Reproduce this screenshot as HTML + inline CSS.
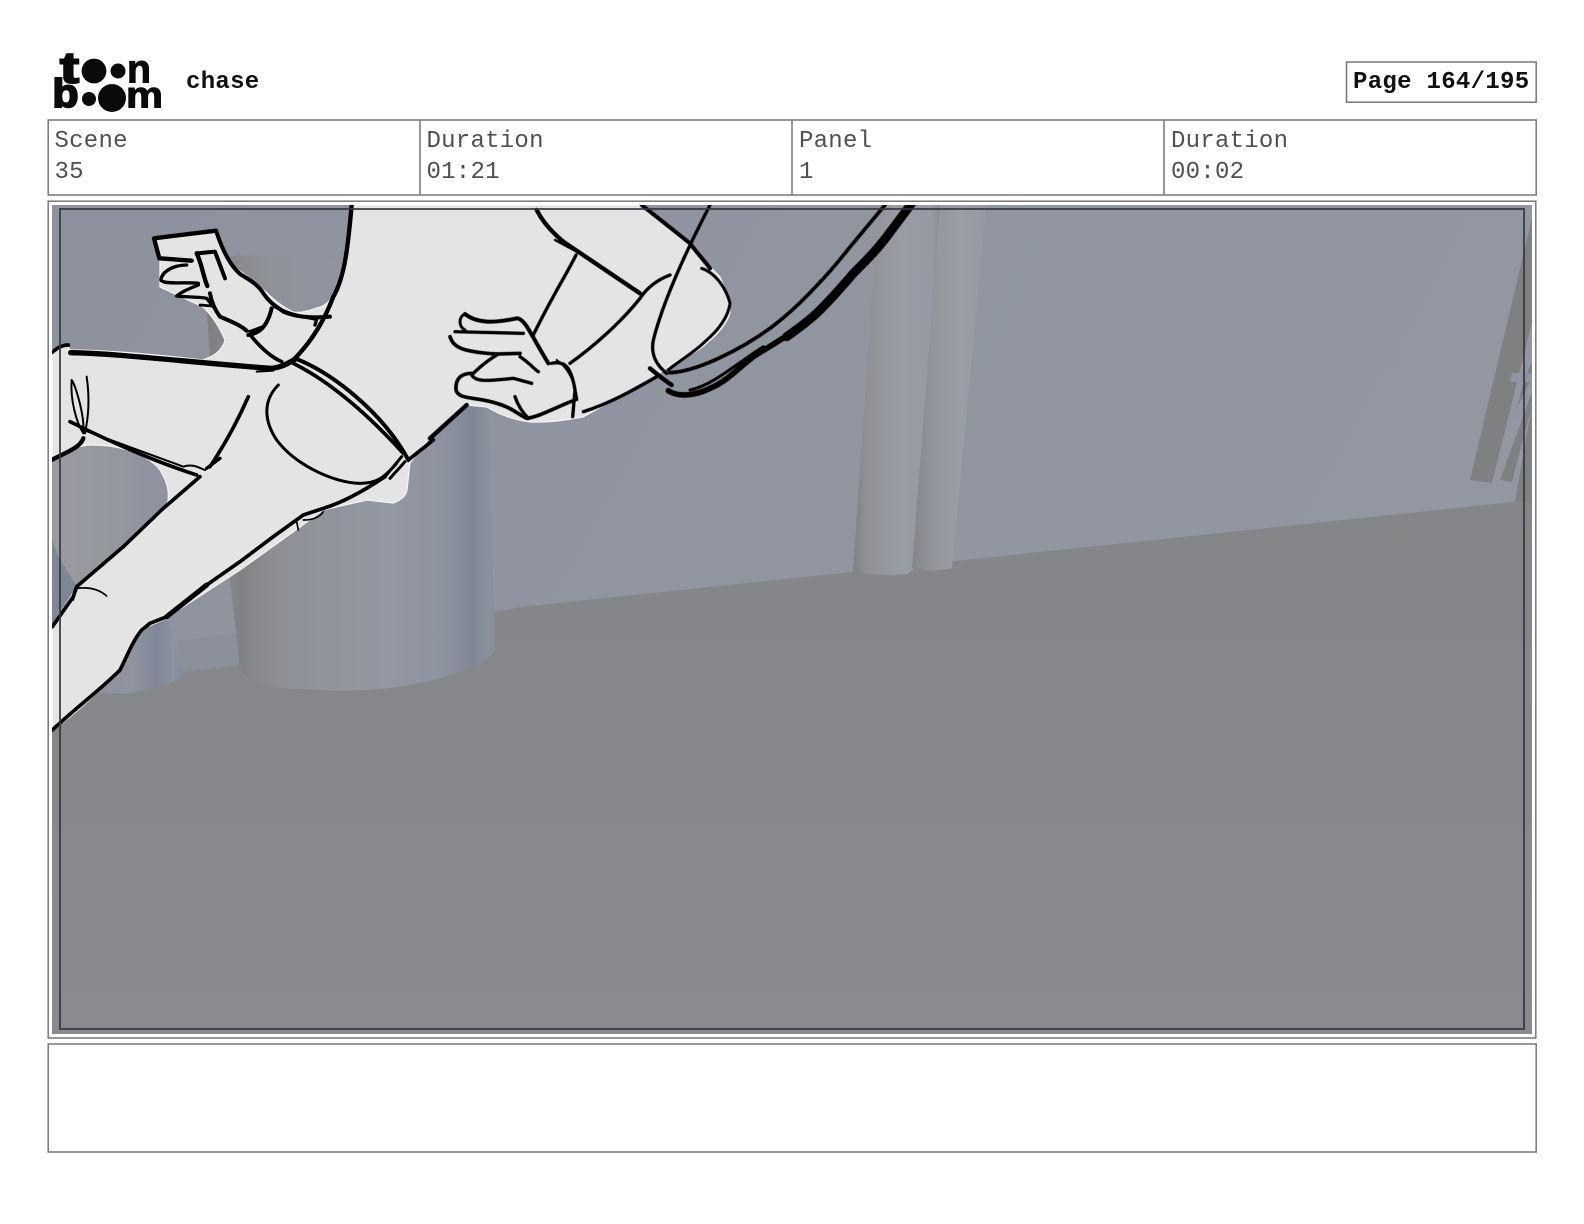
<!DOCTYPE html>
<html lang="en">
<head>
<meta charset="utf-8">
<title>chase - Page 164/195</title>
<style>
html,body{margin:0;padding:0;background:#fff;}
body{width:1584px;height:1224px;position:relative;overflow:hidden;font-family:"Liberation Mono",monospace;}
.t{position:absolute;font-size:24px;line-height:28px;white-space:pre;color:#505050;letter-spacing:.25px;}
.b{font-weight:bold;color:#111;letter-spacing:.3px;}
svg{position:absolute;left:0;top:0;}
</style>
</head>
<body>
<svg width="1584" height="1224" viewBox="0 0 1584 1224">
  <g fill="none" stroke="#777" stroke-width="1.5">
    <rect x="48.2" y="120" width="1488" height="75"/>
    <path d="M420,120V195M792,120V195M1164,120V195"/>
    <rect x="1346.5" y="62" width="189.7" height="40.2"/>
    <rect x="48.2" y="201.2" width="1487.6" height="836.8"/>
    <rect x="48.2" y="1044" width="1488" height="108"/>
  </g>
  <g fill="#0a0a0a" stroke="#0a0a0a" font-family="'Liberation Sans',sans-serif" font-weight="bold">
    <text x="60" y="82.5" font-size="44" stroke-width="2" textLength="19" lengthAdjust="spacingAndGlyphs">t</text>
    <text x="127" y="82.5" font-size="40" stroke-width="1" textLength="24" lengthAdjust="spacingAndGlyphs">n</text>
    <text x="52.5" y="107" font-size="40" stroke-width="2" textLength="26" lengthAdjust="spacingAndGlyphs">b</text>
    <text x="126" y="107.5" font-size="37" stroke-width="1" textLength="37" lengthAdjust="spacingAndGlyphs">m</text>
  </g>
  <g fill="#0a0a0a">
    <circle cx="94" cy="71" r="12.4"/>
    <circle cx="118" cy="71" r="7.5"/>
    <circle cx="89" cy="99" r="7"/>
    <circle cx="112" cy="98" r="14"/>
  </g>
</svg>

<div class="t b" style="left:186px;top:69px">chase</div>
<div class="t b" style="left:1353px;top:69px">Page 164/195</div>

<div class="t" style="left:54.5px;top:128px">Scene</div>
<div class="t" style="left:54.5px;top:159px">35</div>
<div class="t" style="left:426.5px;top:128px">Duration</div>
<div class="t" style="left:426.5px;top:159px">01:21</div>
<div class="t" style="left:799px;top:128px">Panel</div>
<div class="t" style="left:799px;top:159px">1</div>
<div class="t" style="left:1171px;top:128px">Duration</div>
<div class="t" style="left:1171px;top:159px">00:02</div>

<svg width="1584" height="1224" viewBox="0 0 1584 1224">
  <defs>
    <clipPath id="c"><rect x="52" y="205" width="1480" height="829"/></clipPath>
    <linearGradient id="wall" x1="0" y1="0" x2="1" y2="0.3">
      <stop offset="0" stop-color="#8e929e"/><stop offset=".5" stop-color="#9095a0"/><stop offset="1" stop-color="#9297a1"/>
    </linearGradient>
    <linearGradient id="floor" x1="0" y1="0" x2="0" y2="1">
      <stop offset="0" stop-color="#848588"/><stop offset="1" stop-color="#8a8b8f"/>
    </linearGradient>
    <linearGradient id="cyl" x1="0" y1="0" x2="1" y2="0">
      <stop offset="0" stop-color="#858689"/><stop offset=".05" stop-color="#808184"/><stop offset=".11" stop-color="#88898c"/>
      <stop offset=".2" stop-color="#8e9095"/><stop offset=".36" stop-color="#90949c"/><stop offset=".6" stop-color="#9297a1"/>
      <stop offset=".78" stop-color="#8e94a0"/><stop offset=".86" stop-color="#878d9a"/><stop offset=".92" stop-color="#7e8696"/>
      <stop offset=".97" stop-color="#8b919e"/><stop offset="1" stop-color="#878d99"/>
    </linearGradient>
    <linearGradient id="cyl2" x1="0" y1="0" x2="1" y2="0">
      <stop offset="0" stop-color="#8d9199"/><stop offset=".5" stop-color="#8f94a0"/><stop offset=".75" stop-color="#7e8697"/>
      <stop offset=".9" stop-color="#8b92a1"/><stop offset="1" stop-color="#828a9a"/>
    </linearGradient>
    <linearGradient id="blob" x1="0" y1="0" x2="1" y2="0">
      <stop offset="0" stop-color="#9a9b9f"/><stop offset=".5" stop-color="#9597a0"/><stop offset="1" stop-color="#8e929f"/>
    </linearGradient>
    <linearGradient id="col" x1="0" y1="0" x2="1" y2="0">
      <stop offset="0" stop-color="#7e7f82"/><stop offset=".2" stop-color="#898a8e"/><stop offset=".5" stop-color="#90929a"/><stop offset="1" stop-color="#8f94a0"/>
    </linearGradient>
    <linearGradient id="p1" x1="0" y1="0" x2="1" y2="0">
      <stop offset="0" stop-color="#7f8083"/><stop offset=".14" stop-color="#8f9094"/><stop offset=".5" stop-color="#999ca4"/>
      <stop offset=".85" stop-color="#959aa4"/><stop offset="1" stop-color="#82858c"/>
    </linearGradient>
    <linearGradient id="p2" x1="0" y1="0" x2="1" y2="0">
      <stop offset="0" stop-color="#84858a"/><stop offset=".3" stop-color="#94969c"/><stop offset=".65" stop-color="#9a9da5"/>
      <stop offset="1" stop-color="#959aa5"/>
    </linearGradient>
    <filter id="s" x="-2%" y="-2%" width="104%" height="104%"><feGaussianBlur stdDeviation=".3"/></filter>
  </defs>
  <g clip-path="url(#c)">
    <rect x="52" y="205" width="1480" height="829" fill="url(#wall)"/>

    <polygon points="207,310 212,260 237,255 300,258 345,262 345,320 260,370 210,360" fill="url(#col)"/>
    <path d="M52,445 L93,444 C130,446 160,462 168,490 L168,520 L100,610 L52,640 Z" fill="url(#blob)"/>
    <path d="M52,540 L60,560 L77,586 L60,610 L52,625 Z" fill="#7f8696"/>
    <polygon points="177,641 236,633 240,665 183,672" fill="#8b8f99"/>

    <polygon points="183,672 240,665 520,607 1532,500 1532,1034 52,1034 52,700" fill="url(#floor)"/>

    <path d="M228,560 L240,670 C248,680 262,685 273,687 C300,690 340,691 365,690 C405,688 440,680 473,667 C483,662 490,657 495,650 L488,400 L400,400 Z" fill="url(#cyl)"/>
    <path d="M120,660 L140,625 L168,620 C175,640 180,660 184,677 C170,684 150,691 130,693 C115,694 95,694 80,692 Z" fill="url(#cyl2)"/>

    <path d="M878,205 L945,205 L914,568 L908,574 C890,576 872,575 853,572 Z" fill="url(#p1)"/>
    <path d="M940,205 L986,205 L952,568 C940,571 925,571 912,568 Z" fill="url(#p2)"/>

    <polygon points="1532,218 1470,480 1492,483 1532,322" fill="#7f8082"/>
    <polygon points="1500,480 1512,482 1532,405 1532,392" fill="#7f8082"/>
    <polygon points="1515,502 1532,404 1532,502" fill="#7f8082"/>
    <polygon points="1517,408 1532,378 1532,362 1524,380" fill="#7f8082"/>
    <polygon points="1512,373 1532,373 1532,382 1510,382" fill="#8f94a0"/>
    <polygon points="1512,408 1525,408 1522,418 1510,418" fill="#9196a1"/>

    <path d="M352,205 C348,235 344,270 333,297 C326,305 322,307 317,308 C306,312 298,313 293,312 C283,307 275,301 267,293 C258,286 251,279 243,273 C234,268 230,262 227,257 C222,248 220,240 217,230 L153,237 L160,260 L160,287 L203,307 C212,315 220,328 225,340 C223,348 217,354 210,357 L203,360 C160,355 110,350 70,350 L67,345 L52,350 L52,457 C65,450 80,445 93,445 C125,445 150,457 160,470 C168,483 170,495 167,505 C165,512 162,510 155,520 L77,587 L52,627 L52,730 C75,715 100,690 120,670 C128,655 132,640 140,630 L163,620 L240,570 L300,527 L323,510 L367,500 L393,503 C402,500 406,495 407,490 L410,463 L430,437 L467,405 L487,407 C500,415 515,420 530,422 C548,423 565,420 583,417 L653,378 L673,363 C690,355 700,350 707,343 C720,332 727,323 730,313 C728,300 725,288 720,277 L687,243 L640,205 Z" fill="#e4e4e4" stroke="#f4f4f4" stroke-width="1.2"/>

    <g fill="none" stroke="#050505" stroke-linecap="round" stroke-linejoin="round" filter="url(#s)">
      <g transform="translate(50 200) scale(.33333)">
        <path d="M905,15 C895,130 885,230 850,290 C820,370 780,430 730,480" stroke-width="13"/>
        <path d="M498,92 L312,115 L328,175 L425,182" stroke-width="13"/>
        <path d="M498,92 C520,160 545,200 570,222 C600,240 625,255 640,280 C660,310 680,320 700,335 C740,352 790,355 840,350" stroke-width="12"/>
        <path d="M675,320 C720,345 760,350 800,358 L795,375" stroke-width="10"/>
        <path d="M440,160 L495,155 L525,235" stroke-width="12"/>
        <path d="M440,160 C455,190 460,230 472,258" stroke-width="13"/>
        <path d="M410,195 C370,195 335,215 333,240 C340,255 400,245 445,250" stroke-width="10"/>
        <path d="M445,255 C420,265 395,275 380,288 C410,292 450,290 470,295 L490,320" stroke-width="10"/>
        <path d="M450,315 L485,318" stroke-width="8"/>
        <path d="M480,280 C485,310 495,330 510,350 C545,365 570,375 590,392" stroke-width="12"/>
        <path d="M595,405 C625,400 650,385 665,325" stroke-width="12"/>
        <path d="M600,395 L640,380" stroke-width="10"/>
        <path d="M605,410 C630,440 660,470 695,485" stroke-width="11"/>
        <path d="M62,458 C200,460 400,485 660,505 C690,505 715,490 740,475" stroke-width="16"/>
        <path d="M620,515 L670,512" stroke-width="6"/>
        <path d="M5,458 C20,445 35,435 55,435" stroke-width="11"/>
        <path d="M735,475 C850,520 1000,640 1075,780" stroke-width="12"/>
        <path d="M730,490 C850,550 960,650 1060,760" stroke-width="11"/>
        <path d="M595,590 C560,670 520,740 480,800" stroke-width="11"/>
        <path d="M510,775 L470,805" stroke-width="10"/>
        <path d="M685,555 C640,600 640,660 680,720 C740,800 860,850 930,850 C980,850 1000,835 1040,790" stroke-width="9"/>
        <path d="M1005,830 L1055,770 M1020,835 L1065,785" stroke-width="9"/>
        <path d="M65,540 C60,600 80,670 100,700 C105,640 70,540 65,540" stroke-width="6"/>
        <path d="M110,530 C120,600 115,650 105,700" stroke-width="6"/>
        <path d="M60,665 C150,710 300,780 440,825" stroke-width="11"/>
        <path d="M100,690 L400,800 C430,790 450,805 465,810" stroke-width="6"/>
        <path d="M5,780 C40,760 90,745 100,715" stroke-width="13"/>
      </g>
      <g transform="translate(40 440) scale(.33333)">
        <path d="M480,110 L370,205 L250,320 L110,440 L100,470 L37,560" stroke-width="11"/>
        <path d="M110,445 C150,440 180,450 200,468" stroke-width="5"/>
        <path d="M105,450 L100,480" stroke-width="5"/>
        <path d="M1180,0 L1105,60" stroke-width="11"/>
        <path d="M1035,110 C960,160 900,190 850,205 L790,225 L700,290 L600,365 L500,435 L380,530 L330,550" stroke-width="11"/>
        <path d="M770,245 L775,270" stroke-width="5"/>
        <path d="M790,240 C820,240 840,230 850,215" stroke-width="5"/>
        <path d="M380,530 L500,435" stroke-width="15"/>
        <path d="M330,550 L305,570 C280,600 265,640 240,690 C180,750 100,810 37,870" stroke-width="11"/>
      </g>
      <g transform="translate(420 200) scale(.33333)">
        <path d="M30,715 L140,615" stroke-width="13"/>
        <path d="M350,30 C370,70 400,100 430,125 L660,280" stroke-width="13"/>
        <path d="M405,120 L470,155" stroke-width="7"/>
        <path d="M468,165 C430,240 390,300 340,405" stroke-width="10"/>
        <path d="M750,225 C710,240 680,265 660,295 C600,370 520,440 450,490" stroke-width="10"/>
        <path d="M665,15 L810,130 C840,170 860,190 870,205" stroke-width="12"/>
        <path d="M845,205 C890,220 920,270 930,310 C925,350 895,390 860,420 C820,460 780,480 745,510" stroke-width="9"/>
        <path d="M870,15 C800,150 730,300 700,420 C690,470 715,500 740,520" stroke-width="10"/>
        <path d="M690,505 C720,530 740,545 755,555" stroke-width="13"/>
        <path d="M490,635 C570,610 640,570 710,530" stroke-width="10"/>
        <path d="M135,342 C115,350 115,380 135,390" stroke-width="9"/>
        <path d="M135,342 C170,370 220,370 290,355 C315,355 330,400 385,490" stroke-width="12"/>
        <path d="M105,395 L310,400" stroke-width="10"/>
        <path d="M90,410 C100,440 120,455 230,462 L300,460" stroke-width="11"/>
        <path d="M230,465 C190,490 170,510 155,525 C170,550 220,540 280,535 L335,550" stroke-width="10"/>
        <path d="M300,470 C330,490 345,510 355,515" stroke-width="10"/>
        <path d="M155,520 C130,520 105,530 108,570 C115,600 170,590 230,610 C270,620 290,640 320,655 C360,650 410,620 465,600" stroke-width="11"/>
        <path d="M285,590 C295,620 310,640 325,655" stroke-width="10"/>
        <path d="M395,490 C440,480 455,510 465,570 L458,650" stroke-width="10"/>
        <path d="M410,480 C440,500 465,540 472,600" stroke-width="6"/>
        <path d="M750,518 C830,515 960,450 1050,385 C1110,340 1160,290 1200,246 C1240,205 1270,165 1300,129 L1395,15" stroke-width="11"/>
        <path d="M745,572 C770,590 820,590 870,565 C920,545 960,500 1000,470 C1080,420 1150,380 1200,330" stroke-width="17"/>
        <path d="M1100,410 C1150,375 1175,355 1200,330 C1240,290 1270,255 1300,220 C1340,180 1370,150 1400,110 L1475,10" stroke-width="27"/>
        <path d="M810,570 C880,555 950,490 1030,440" stroke-width="9"/>
      </g>
    </g>

    <rect x="60" y="209" width="1464" height="820" fill="none" stroke="#33373e" stroke-width="2" opacity=".85"/>
  </g>
</svg>
</body>
</html>
